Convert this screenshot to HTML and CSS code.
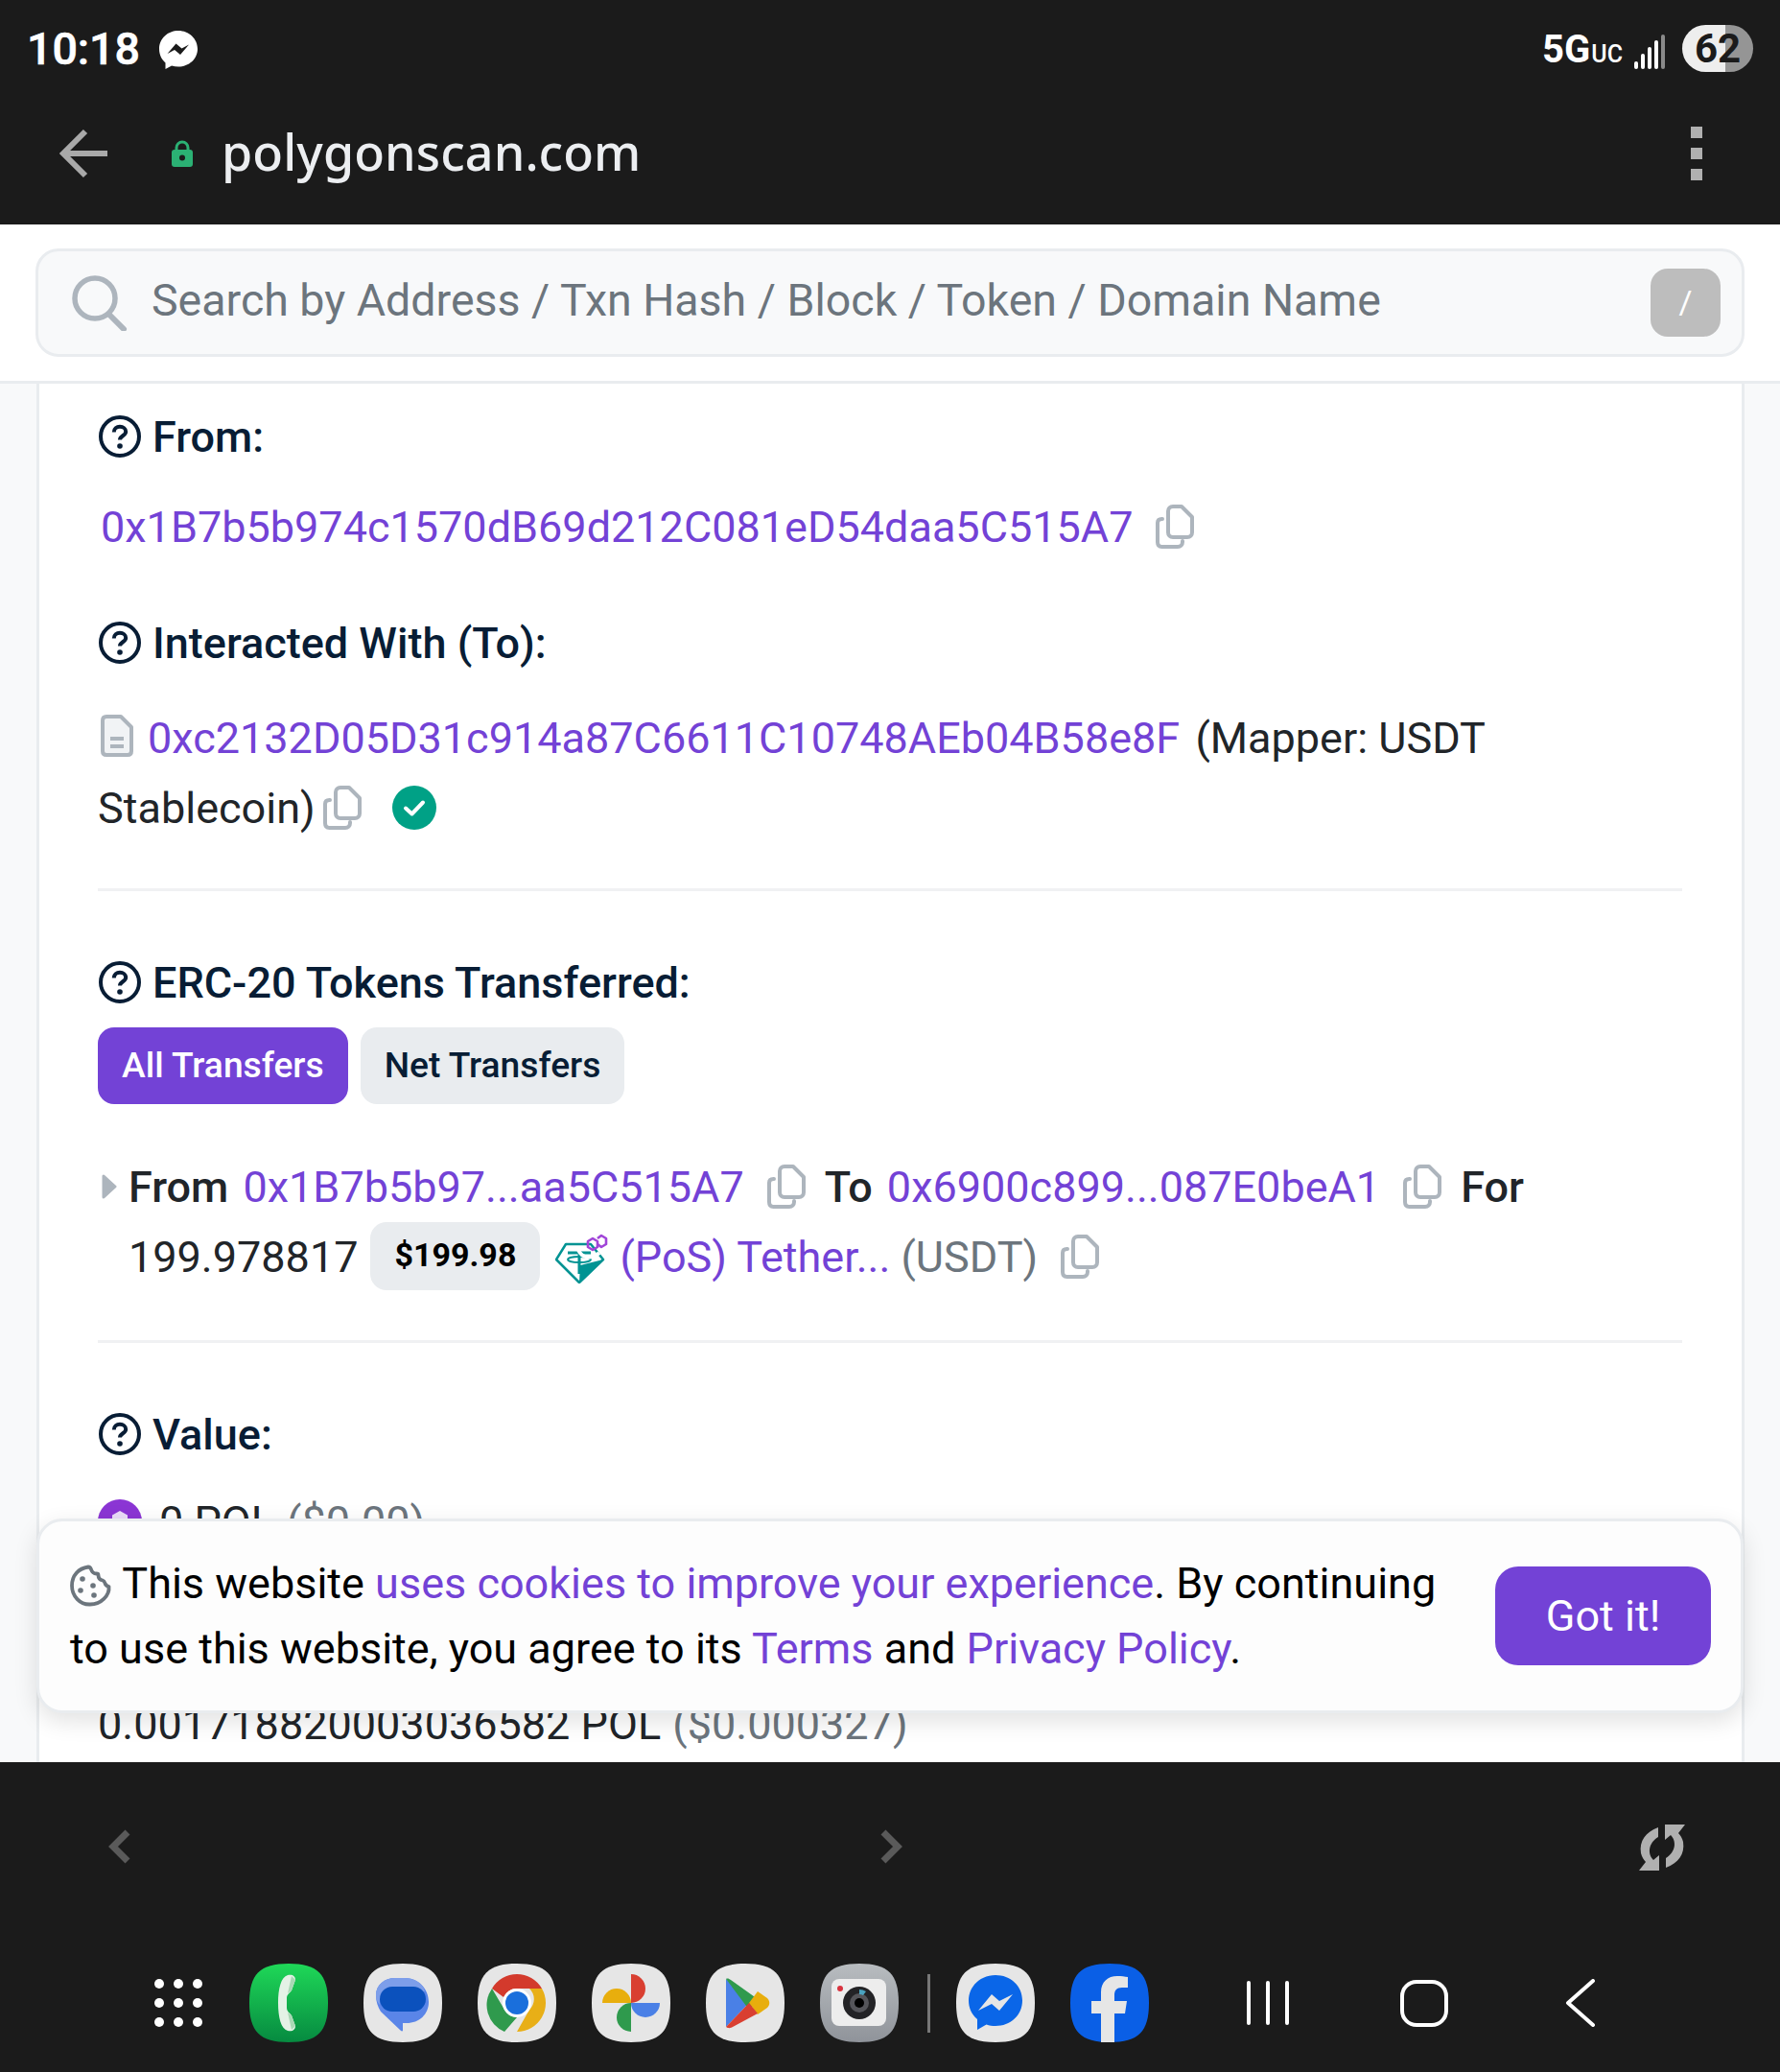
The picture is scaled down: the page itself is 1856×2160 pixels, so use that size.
FILE: index.html
```html
<!DOCTYPE html>
<html lang="en">
<head>
<meta charset="utf-8">
<title>polygonscan.com</title>
<link rel="stylesheet" href="styles.css">
</head>
<body>
<svg class="defs" width="0" height="0" aria-hidden="true">
  <symbol id="help" viewBox="0 0 44 44">
    <circle cx="22" cy="22" r="20" fill="none" stroke="#081d35" stroke-width="4"/>
    <path d="M15.800 17.500c0-3.600 2.900-5.700 6.200-5.700s6.200 2.100 6.200 5.200c0 4.200-6.200 4.300-6.200 8.500" fill="none" stroke="#081d35" stroke-width="4"/>
    <circle cx="22" cy="32" r="2.800" fill="#081d35"/>
  </symbol>
  <symbol id="copy" viewBox="0 0 41 46">
    <path d="M13 7c0-3 2-5 5-5h9l11 11v16c0 3-2 5-5 5H18c-3 0-5-2-5-5Z" fill="none" stroke="#adb5bd" stroke-width="4" stroke-linejoin="round"/>
    <path d="M7 15H6.500C3.500 15 2 16.500 2 19v20c0 3 1.500 5 4.500 5H23c3 0 5-2 5-5v-1" fill="none" stroke="#adb5bd" stroke-width="4" stroke-linecap="round"/>
  </symbol>
  <symbol id="squircle" viewBox="0 0 82 82">
    <path d="M41 0C71 0 82 11 82 41S71 82 41 82 0 71 0 41 11 0 41 0Z"/>
  </symbol>
</svg>

<div class="phone">
  <header class="topbar">
    <div class="status">
      <div class="status-left">
        <span class="clock">10:18</span>
        <svg class="msg-mini" viewBox="0 0 40 40"><path d="M20 0C9 0 0 8 0 19c0 6 2.500 11 6.500 14.500V40l6.500-3.500c2.200.6 4.500 1 7 1 11 0 20-8 20-18.500S31 0 20 0Z" fill="#fff"/><path d="M8.500 24l9-10.500 6 5 7.500-4-9 10.500-6-5Z" fill="#1b1b1b"/></svg>
      </div>
      <div class="status-right">
        <span class="net">5G<small>UC</small></span>
        <svg class="signal" viewBox="0 0 34 36"><rect x="0" y="28" width="4" height="8" rx="2" fill="#fff"/><rect x="7" y="20" width="4" height="16" rx="2" fill="#fff"/><rect x="14" y="13" width="4" height="23" rx="2" fill="#fff"/><rect x="21" y="6" width="4" height="30" rx="2" fill="#fff"/><rect x="28" y="0" width="4" height="36" rx="2" fill="#8a8a8a"/></svg>
        <span class="battery">62</span>
      </div>
    </div>
    <div class="urlbar">
      <svg class="back" viewBox="0 0 52 52"><path d="M50 26H5M27 3 4 26l23 23" fill="none" stroke="#a9a9a9" stroke-width="6"/></svg>
      <svg class="lock" viewBox="0 0 22 28"><path d="M5 12V8a6 6 0 0 1 12 0v4" fill="none" stroke="#2bb174" stroke-width="3"/><rect y="10" width="22" height="18" rx="3" fill="#2bb174"/><circle cx="11" cy="18.500" r="3" fill="#1b1b1b"/></svg>
      <span class="url">polygonscan.com</span>
      <span class="kebab"><i></i><i></i><i></i></span>
    </div>
  </header>

  <div class="searchwrap">
    <div class="search">
      <svg class="search-ico" viewBox="0 0 58 58"><circle cx="24" cy="24" r="21" fill="none" stroke="#adb5bd" stroke-width="5.500"/><path d="M39 41l15 15" stroke="#adb5bd" stroke-width="6" stroke-linecap="round"/></svg>
      <span class="placeholder">Search by Address / Txn Hash / Block / Token / Domain Name</span>
      <span class="slash">/</span>
    </div>
  </div>

  <main class="content">
    <section class="card">
      <h2 class="label first"><svg class="help"><use href="#help"/></svg>From:</h2>
      <p class="line hash-row"><a class="link">0x1B7b5b974c1570dB69d212C081eD54daa5C515A7</a><svg class="copy gap-copy"><use href="#copy"/></svg></p>

      <h2 class="label to"><svg class="help"><use href="#help"/></svg>Interacted With (To):</h2>
      <p class="line contract">
        <svg class="doc" viewBox="0 0 34 44"><path d="M2 6c0-2.500 1.500-4 4-4h15l11 11v25c0 2.500-1.500 4-4 4H6c-2.500 0-4-1.500-4-4Z" fill="#f1f3f5" stroke="#adb5bd" stroke-width="4" stroke-linejoin="round"/><path d="M10 25h14M10 33h14" stroke="#adb5bd" stroke-width="4"/></svg><a class="link">0xc2132D05D31c914a87C6611C10748AEb04B58e8F</a> <span class="mapper">(Mapper: USDT Stablecoin)</span><svg class="copy tight"><use href="#copy"/></svg><svg class="verified" viewBox="0 0 46 46"><circle cx="23" cy="23" r="23" fill="#00a186"/><path d="M14 23.500l6.500 6L32 17.500" fill="none" stroke="#fff" stroke-width="4" stroke-linecap="round" stroke-linejoin="round"/></svg>
      </p>
      <hr class="rule rule-a">

      <h2 class="label"><svg class="help"><use href="#help"/></svg>ERC-20 Tokens Transferred:</h2>
      <div class="tabs">
        <span class="tab tab-on">All Transfers</span>
        <span class="tab">Net Transfers</span>
      </div>
      <div class="transfer">
        <svg class="caret" viewBox="0 0 16 26"><path d="M2 2v22l12-11Z" fill="#adb5bd" stroke="#adb5bd" stroke-width="3" stroke-linejoin="round"/></svg>
        <p class="line"><b class="kw kw-gap">From</b> <a class="link">0x1B7b5b97...aa5C515A7</a><svg class="copy gap-copy2"><use href="#copy"/></svg><b class="kw kw-gap">To</b> <a class="link">0x6900c899...087E0beA1</a><svg class="copy gap-copy2"><use href="#copy"/></svg><b class="kw">For</b><br>199.978817<span class="usd">$199.98</span><svg class="tether" viewBox="0 0 56 52"><path d="M1 27 11 11h26l13 16-25 24Z" fill="#fff" stroke="#009393" stroke-width="2.500" stroke-linejoin="round"/><path d="M25 51 50 27 26 33Z" fill="#009393"/><path d="M13 20h24M25 20v22" fill="none" stroke="#009393" stroke-width="3"/><ellipse cx="25" cy="27" rx="12" ry="3" fill="none" stroke="#009393" stroke-width="2"/><path d="M24 17C28 26 38 27 46 20" fill="none" stroke="#fff" stroke-width="4"/><path d="M34 8l5-3 5 3v6l-5 3-5-3Z" fill="none" stroke="#a044d8" stroke-width="2.600" stroke-linejoin="round"/><path d="M44 5l4-3 5 3v6l-5 3-4-3" fill="none" stroke="#a044d8" stroke-width="2.600" stroke-linejoin="round"/></svg><a class="link">(PoS) Tether...</a> <span class="muted">(USDT)</span><svg class="copy gap-copy"><use href="#copy"/></svg></p>
      </div>
      <hr class="rule rule-b">

      <h2 class="label"><svg class="help"><use href="#help"/></svg>Value:</h2>
      <p class="line pol"><svg class="pol-ico" viewBox="0 0 46 46"><circle cx="23" cy="23" r="23" fill="#8b35d4"/><path d="M23 12l8 4.500v8l-8 4.500-8-4.500v-8Z" fill="#eadcf8"/></svg>0 POL <span class="muted">($0.00)</span></p>
      <p class="line fee">0.001718820003036582 POL <span class="muted fee-usd">($0.000327)</span></p>
    </section>

    <aside class="cookie">
      <p class="cookie-text"><svg class="cookie-ico" viewBox="0 0 44 44"><path d="M19 2.500c1.500 0 2.500 1 3 2.500 1 3 3 4.500 5.500 4.500 1 0 2 .5 2 1.500 0 3 2 5 4.500 5.500 1.500.5 2 1.500 2.500 3 .5 2 2 3 4 3.500 1 9-8 18.500-19.500 18.500C10.500 42 2 33 2 22S9 4 19 2.500Z" fill="none" stroke="#6c757d" stroke-width="3.800" stroke-linejoin="round"/><circle cx="13" cy="15" r="2.800" fill="#6c757d"/><circle cx="11" cy="27" r="2.800" fill="#6c757d"/><circle cx="24" cy="22" r="2.800" fill="#6c757d"/><circle cx="25" cy="32" r="2.800" fill="#6c757d"/></svg> This website <a class="link">uses cookies to improve your experience</a>. By continuing to use this website, you agree to its <a class="link">Terms</a> and <a class="link">Privacy Policy</a>.</p>
      <span class="got">Got it!</span>
    </aside>
  </main>

  <footer class="bottombar">
    <div class="browser-nav">
      <svg class="chev" viewBox="0 0 24 36"><path d="M20 3 5 18l15 15" fill="none" stroke="#5a5a5a" stroke-width="7"/></svg>
      <svg class="chev" viewBox="0 0 24 36"><path d="M4 3l15 15L4 33" fill="none" stroke="#5a5a5a" stroke-width="7"/></svg>
      <svg class="refresh" viewBox="0 0 48 48"><path d="M20 3C7 8 0 17 2 30c1 4 3 7 5 9l-7 9h21V32l-6 5c-6-6-6-17 5-24Z" fill="#b0b0b0"/><path d="M28 45c13-5 20-14 18-27-1-4-3-7-5-9l7-9H27v16l6-5c6 6 6 17-5 24Z" fill="#b0b0b0"/></svg>
    </div>
    <div class="dockrow">
      <div class="dock">
        <svg class="grid" viewBox="0 0 50 50"><g fill="#fff"><circle cx="5" cy="5" r="5"/><circle cx="25" cy="5" r="5"/><circle cx="45" cy="5" r="5"/><circle cx="5" cy="25" r="5"/><circle cx="25" cy="25" r="5"/><circle cx="45" cy="25" r="5"/><circle cx="5" cy="45" r="5"/><circle cx="25" cy="45" r="5"/><circle cx="45" cy="45" r="5"/></g></svg>
        <svg class="app" viewBox="0 0 82 82"><defs><linearGradient id="gp" x1="0" y1="0" x2="0" y2="1"><stop offset="0" stop-color="#1fd858"/><stop offset="1" stop-color="#068a40"/></linearGradient></defs><use href="#squircle" fill="url(#gp)"/><path d="M40 12c5-1 8 1 8 5l-4 11c-2 3-5 4-5 8v10c0 4 3 5 5 8l4 11c0 4-3 6-8 5-7-2-10-14-10-29s3-27 10-29Z" fill="#e4f2e6"/><path d="M44 13l4 4-4 11-4 3Zm-4 38 4 3 4 11-4 4Z" fill="#a9d8b5"/></svg>
        <svg class="app" viewBox="0 0 82 82"><use href="#squircle" fill="#e6e6e6"/><path d="M13 33c0-11 9-18 20-18h10c14 0 25 11 25 25 0 13-10 22-23 22h-4v8c-1 1-2 0-3-1L18 50c-3-5-5-10-5-17Z" fill="#5a85e8"/><path d="M13 33c0-11 9-18 20-18h10c10 0 19 5 21 14H30c-8 0-13 6-13 14-3-3-4-7-4-10Z" fill="#7d9eea"/><rect x="17" y="24" width="48" height="26" rx="13" fill="#0b51bd"/></svg>
        <svg class="app" viewBox="0 0 82 82"><use href="#squircle" fill="#e6e6e6"/><path d="M15 26a30 30 0 0 1 52 0H41a15 15 0 0 0-14 9Z" fill="#d33a2c"/><path d="M15 26l13 22a15 15 0 0 0 13 8l-13 15A30 30 0 0 1 15 26Z" fill="#2f9a4d"/><path d="M67 26a30 30 0 0 1-26 45l13-23a15 15 0 0 0 0-22Z" fill="#e8af17"/><circle cx="41" cy="41" r="15" fill="#fff"/><circle cx="41" cy="41" r="12" fill="#1a6fdc"/></svg>
        <svg class="app" viewBox="0 0 82 82"><use href="#squircle" fill="#e6e6e6"/><path d="M41 11a15 15 0 0 1 0 30Z" fill="#d93f31"/><path d="M11 41a15 15 0 0 1 30 0Z" fill="#e8ae0d"/><path d="M41 41h30a15 15 0 0 1-30 0Z" fill="#4a80e6"/><path d="M41 41v30a15 15 0 0 1 0-30Z" fill="#2f9a4d"/></svg>
        <svg class="app" viewBox="0 0 82 82"><use href="#squircle" fill="#e6e6e6"/><path d="M21 16l24 25-24 25Z" fill="#4a80e6"/><path d="M21 16c2-1 3 0 5 1l28 20-9 11Z" fill="#2f9a4d"/><path d="M54 29l10 7c3 3 3 7 0 10l-10 7-9-12Z" fill="#e8ae0d"/><path d="M21 66c3 2 5 1 7 0l26-14-9-11Z" fill="#d93f31"/></svg>
        <svg class="app" viewBox="0 0 82 82"><defs><linearGradient id="gc" x1="0" y1="0" x2="0" y2="1"><stop offset="0" stop-color="#b8bcc0"/><stop offset="1" stop-color="#8f939a"/></linearGradient></defs><use href="#squircle" fill="url(#gc)"/><rect x="12" y="16" width="57" height="49" rx="8" fill="#ededed"/><circle cx="21" cy="26" r="3" fill="#d9333f"/><circle cx="41" cy="41" r="17" fill="#232326"/><circle cx="41" cy="41" r="10" fill="#55555a"/><circle cx="41" cy="41" r="5" fill="#000"/><path d="M41 27a14 14 0 0 1 7 2l-3 4a8 8 0 0 0-4-1Z" fill="#4aa3c0"/></svg>
        <span class="sep"></span>
        <svg class="app" viewBox="0 0 82 82"><use href="#squircle" fill="#e6e6e6"/><path d="M41 12c-15.500 0-28 11.500-28 26.500 0 8 3.500 15 9 19.500v11l9.500-5.500c3 1 6.200 1.500 9.500 1.500 15.500 0 28-11 28-26.500S56.500 12 41 12Z" fill="#0a66e8"/><path d="M23 49l14-17 8 7 14-7-14 17-8-7Z" fill="#e6e6e6"/></svg>
        <svg class="app" viewBox="0 0 82 82"><use href="#squircle" fill="#0a5fe6"/><path d="M32 82V52H22V39h10v-9c0-11 7-17 17-17 4 0 8 .5 11 1v11h-6c-6 0-8 3-8 8v6h13l-2 13H46v30Z" fill="#e6e6e6"/></svg>
      </div>
      <div class="softkeys">
        <span class="recents"><i></i><i></i><i></i></span>
        <span class="home"></span>
        <svg class="softback" viewBox="0 0 32 50"><path d="M29 2 3 25l26 23" fill="none" stroke="#fff" stroke-width="4" stroke-linecap="round" stroke-linejoin="round"/></svg>
      </div>
    </div>
  </footer>
</div>
</body>
</html>
```

FILE: styles.css
```css
* { box-sizing: border-box; }
html, body { margin: 0; padding: 0; }
body { font-family: Roboto, "Liberation Sans", sans-serif; background: #1b1b1b; }
.defs { position: absolute; }
.phone { width: 1856px; height: 2160px; display: flex; flex-direction: column; overflow: hidden; }

/* top */
.topbar { height: 234px; background: #1b1b1b; color: #fff; flex: none; }
.status { height: 104px; padding: 26px 28px 0 28px; display: flex; justify-content: space-between; align-items: flex-start; }
.status-left { display: flex; align-items: center; gap: 20px; height: 50px; }
.clock { font-size: 46.500px; font-weight: 500; -webkit-text-stroke: .6px #fff; line-height: 50px; }
.msg-mini { width: 40px; height: 40px; margin-top: 2px; }
.status-right { display: flex; align-items: center; height: 49px; }
.net { font-size: 40px; font-weight: 700; line-height: 49px; padding-top: 7px; }
.net small { font-size: 25px; font-weight: 500; margin-left: 1px; }
.signal { width: 34px; height: 36px; margin: 7px 16px 0 12px; }
.battery { width: 74px; height: 49px; border-radius: 25px; background: linear-gradient(90deg, #eee 0 45px, #959595 45px); color: #1b1b1b; font-size: 42px; font-weight: 700; line-height: 49px; text-align: center; }
.urlbar { display: flex; align-items: center; height: 112px; padding: 0 81px 0 62px; }
.back { width: 52px; height: 52px; }
.lock { width: 22px; height: 28px; margin-left: 65px; }
.url { font-family: "Noto Sans", sans-serif; font-size: 52px; font-weight: 500; letter-spacing: .1px; line-height: 60px; padding-bottom: 4px; color: #eceef1; margin-left: 30px; flex: 1; }
.kebab { display: flex; flex-direction: column; gap: 10px; }
.kebab i { display: block; width: 12px; height: 12px; background: #b0b0b0; }

/* search */
.searchwrap { flex: none; height: 166px; padding: 25px 37px 0; background: #fff; border-bottom: 3px solid #e9ecef; }
.search { height: 113px; display: flex; align-items: center; padding: 0 22px 0 36px; background: #f8f9fa; border: 3px solid #e9ecef; border-radius: 24px; }
.search-ico { width: 58px; height: 58px; flex: none; margin-left: -1px; }
.placeholder { flex: 1; margin-left: 25px; padding-bottom: 5px; font-size: 46.500px; line-height: 56px; color: #6c757d; white-space: nowrap; }
.slash { width: 73px; height: 71px; border-radius: 18px; background: #bdbdbd; color: #fff; font-size: 34px; text-align: center; line-height: 71px; }

/* content */
.content { flex: 1; position: relative; background: #f8f9fa; overflow: hidden; padding: 0 37px 0 38px; }
.card { height: 100%; background: #fff; border-left: 3px solid #e9ecef; border-right: 3px solid #e9ecef; padding: 19px 62px 0 61px; }
.label { margin: 59px 0 0; display: flex; align-items: center; gap: 12px; font-size: 45px; font-weight: 500; line-height: 73px; color: #081d35; }
.label.first { margin-top: 0; }
.label.to { margin-top: 48px; }
.help { width: 44px; height: 44px; flex: none; margin: -1px 0 0 1px; }
.line { margin: 0; font-size: 45px; line-height: 73px; color: #212529; }
.link { color: #7342d6; }
.muted { color: #6c757d; }
.fee-usd { margin-left: 1px; }
.hash-row { margin-top: 21px; padding-left: 3px; }
.copy { width: 41px; height: 46px; vertical-align: -7px; }
.gap-copy { margin-left: 24px; }
.gap-copy2 { margin: 0 19px 0 24px; }
.tight { margin-left: 8px; }
.contract { margin-top: 26px; }
.doc { width: 34px; height: 44px; vertical-align: -4px; margin: 0 15px 0 3px; }
.mapper { margin-left: 5px; }
.verified { width: 46px; height: 46px; vertical-align: -7px; margin-left: 31px; }
.rule { margin: 0; height: 3px; border: 0; background: #f0f1f3; }
.rule-a { margin-top: 47px; }
.rule-b { margin-top: 50px; }
.tabs { display: flex; gap: 13px; margin-top: 10px; }
.tab { height: 80px; padding: 0 25px; border-radius: 17px; background: #e9ecef; color: #081d35; font-size: 37.200px; font-weight: 500; line-height: 78px; }
.tab-on { background: #7342d6; color: #fff; }
.transfer { position: relative; margin-top: 50px; padding-left: 32px; }
.caret { position: absolute; left: 4px; top: 23px; width: 16px; height: 26px; }
.kw { font-weight: 500; }
.kw-gap { margin-right: 4px; }
.usd { display: inline-block; height: 71px; margin: 0 16px 0 13px; padding: 0 25px; border-radius: 17px; background: #e9ecef; color: #000; font-size: 34px; font-weight: 700; line-height: 68px; vertical-align: top; }
.tether { width: 56px; height: 52px; vertical-align: -12px; margin-right: 11px; }
.pol { margin-top: 18px; display: flex; gap: 18px; }
.pol .muted { margin-left: -5px; }
.pol-ico { width: 46px; height: 46px; margin-top: 13px; }
.fee { margin-top: 138px; }

/* cookie */
.cookie { position: absolute; left: 38px; right: 38px; top: 1183px; height: 203px; display: flex; align-items: center; gap: 24px; padding: 0 31px 0 32px; background: #fdfdfd; border: 3px solid #e9ecef; border-radius: 27px; box-shadow: 0 8px 24px rgba(0,0,0,.12); }
.cookie-text { margin: 0; flex: 1; font-size: 45px; line-height: 68px; color: #000; }
.cookie-ico { width: 44px; height: 44px; vertical-align: -9px; }
.got { width: 225px; height: 103px; border-radius: 24px; background: #7342d6; color: #fff; font-size: 45px; text-align: center; line-height: 103px; flex: none; }

/* bottom */
.bottombar { height: 323px; flex: none; background: #1b1b1b; }
.browser-nav { height: 177px; display: grid; grid-template-columns: 113px 24px 780px 24px 1fr; padding-top: 70px; }
.browser-nav .chev { width: 24px; height: 36px; grid-column: 2; }
.browser-nav .chev + .chev { grid-column: 4; }
.refresh { grid-column: 5; justify-self: end; width: 48px; height: 48px; margin: -5px 99px 0 0; }
.dockrow { display: flex; align-items: center; padding: 33px 0 0 161px; }
.dock { display: flex; align-items: center; }
.grid { width: 50px; height: 50px; margin-right: 49px; }
.app { width: 82px; height: 82px; margin-right: 37px; }
.sep { width: 3px; height: 61px; background: #777; margin: 0 30px 0 -7px; }
.sep + .app { margin-left: -3px; }
.softkeys { display: flex; align-items: center; margin-left: 65px; }
.recents { display: flex; gap: 16px; }
.recents i { width: 4px; height: 46px; background: #fff; border-radius: 2px; }
.home { width: 50px; height: 49px; border: 4px solid #fff; border-radius: 17px; margin-left: 116px; }
.softback { width: 32px; height: 50px; margin-left: 122px; }
```
